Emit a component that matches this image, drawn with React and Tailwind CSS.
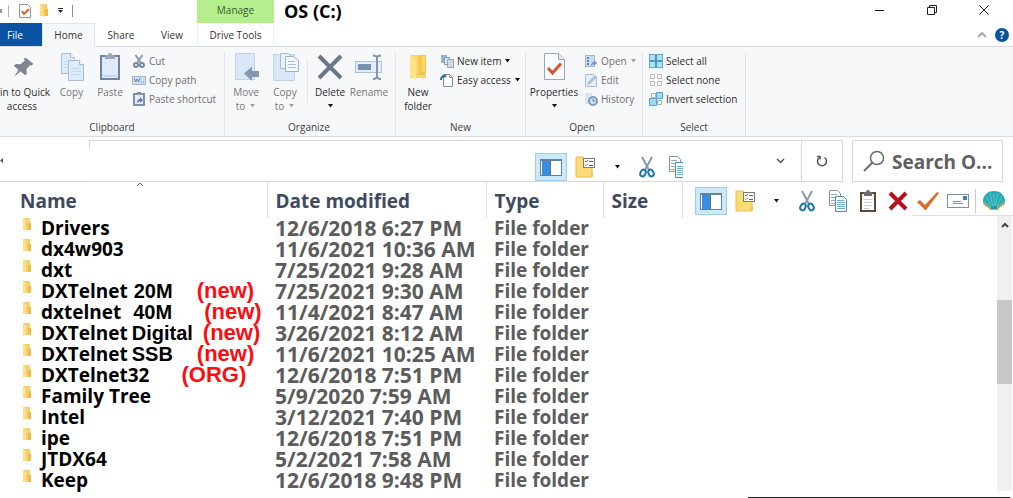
import React, { useState } from 'react'

const rows = [
  { name: 'Drivers', date: '12/6/2018 6:27 PM' },
  { name: 'dx4w903', date: '11/6/2021 10:36 AM' },
  { name: 'dxt', date: '7/25/2021 9:28 AM' },
  { name: 'DXTelnet', extra: '20M', extraCls: 'ml-1.5', note: '(new)', noteCls: 'ml-6', date: '7/25/2021 9:30 AM' },
  { name: 'dxtelnet', extra: '40M', extraCls: 'ml-3', note: '(new)', noteCls: 'ml-8', date: '11/4/2021 8:47 AM' },
  { name: 'DXTelnet', extra: 'Digital', extraCls: 'ml-1', note: '(new)', noteCls: 'ml-2.5', date: '3/26/2021 8:12 AM' },
  { name: 'DXTelnet', extra: 'SSB', extraCls: 'ml-1', note: '(new)', noteCls: 'ml-6', date: '11/6/2021 10:25 AM' },
  { name: 'DXTelnet32', note: '(ORG)', noteCls: 'ml-8', date: '12/6/2018 7:51 PM' },
  { name: 'Family Tree', date: '5/9/2020 7:59 AM' },
  { name: 'Intel', date: '3/12/2021 7:40 PM' },
  { name: 'ipe', date: '12/6/2018 7:51 PM' },
  { name: 'JTDX64', date: '5/2/2021 7:58 AM' },
  { name: 'Keep', date: '12/6/2018 9:48 PM' },
]

function Svg({ w, h, children, className = '' }) {
  return (
    <svg width={w} height={h} viewBox={`0 0 ${w} ${h}`} fill="none" aria-hidden="true" className={`shrink-0 ${className}`}>
      {children}
    </svg>
  )
}

const Caret = ({ color = '#111' }) => (
  <Svg w={7} h={4}><path d="M1 0h5L3.5 3.5z" fill={color} /></Svg>
)

/* ---------- ribbon icons, large ---------- */

const PinIcon = () => (
  <Svg w={32} h={32}>
    <path d="M19.5 6.5l8 6.5-2.2 1.4-1.1-.4-3.9 4.4.6 4.4-1.9 1.5-4.4-4-6.4 5.4 4.3-7-4.6-3.8 1.9-1.8 4.8.1 4.2-3.8-.8-1.3z" fill="#7d8590" />
  </Svg>
)

const Page = ({ x, y, w, h }) => (
  <>
    <path d={`M${x + 0.5} ${y + 0.5}h${w - 5}l4 4v${h - 4}h${-(w - 1)}z`} fill="#deebf9" stroke="#a6bbd6" />
    <path d={`M${x + w - 4.5} ${y + 0.5}v4h4`} stroke="#a6bbd6" fill="#f4f8fd" />
    <path d={`M${x + 3} ${y + 8.5}h${w - 6}M${x + 3} ${y + 11.5}h${w - 6}M${x + 3} ${y + 14.5}h${w - 6}`} stroke="#c8d9ee" />
  </>
)

const CopyIcon = () => (
  <Svg w={32} h={32}>
    <Page x={5} y={2} w={14} h={20} />
    <Page x={12} y={9} w={16} h={20} />
  </Svg>
)

const PasteIcon = () => (
  <Svg w={32} h={32}>
    <rect x="7" y="5" width="18" height="23" fill="#dfebfb" stroke="#71819f" strokeWidth="2" />
    <path d="M11 4h3q0-2 2-2t2 2h3v4H11z" fill="#9aa7ba" />
    <path d="M9 25h14" stroke="#c4d6ee" strokeWidth="2" />
  </Svg>
)

const MoveIcon = () => (
  <Svg w={32} h={32}>
    <rect x="5.500" y="2.500" width="19" height="26" fill="#dae7f7" stroke="#c2d3e9" />
    <path d="M14 22.500l8-7v4.500h7v6h-7v4z" fill="#8697b1" />
  </Svg>
)

const CopyToIcon = () => (
  <Svg w={32} h={32}>
    <rect x="4.500" y="3.500" width="21" height="26" fill="#dae7f7" stroke="#c2d3e9" />
    <path d="M11.500 2.500h8l4 4v11h-12z" fill="#e9f1fb" stroke="#a9bdd8" />
    <path d="M16.500 5.500h8l5 4v11h-13z" fill="#f4f8fd" stroke="#9db1cd" />
    <path d="M19 10.500h7M19 13.500h8M19 16.500h8" stroke="#a9bdd8" />
  </Svg>
)

const DeleteIcon = () => (
  <Svg w={32} h={32}>
    <path d="M5 5l22 22M27 5L5 27" stroke="#6b7789" strokeWidth="4" />
  </Svg>
)

const RenameIcon = () => (
  <Svg w={32} h={32}>
    <rect x="2.500" y="10.500" width="26" height="11" fill="#e4eefa" stroke="#aac0de" />
    <rect x="5" y="13" width="13" height="6" fill="#7990b3" />
    <path d="M20 4.500q4 0 4 2.500v18q0 3-4 3M28 4.500q-4 0-4 2.500v18q0 3 4 3" stroke="#8194b1" strokeWidth="2" />
  </Svg>
)

const FolderBigIcon = () => (
  <Svg w={32} h={32}>
    <path d="M8 4h16v23H8z" fill="#fbd765" />
    <path d="M16 4h8v20h-8z" fill="#f3c64e" />
    <path d="M8 4l6 4v21l-6-4z" fill="#ffe389" />
    <path d="M20 5h3v16h-3z" fill="#fbd565" />
  </Svg>
)

const PropertiesIcon = () => (
  <Svg w={32} h={32}>
    <path d="M6.500 2.500h14l6 6v20h-20z" fill="#fafcfe" stroke="#9aa7b8" />
    <path d="M20.500 2.500v6h6" fill="#e3eaf2" stroke="#9aa7b8" />
    <path d="M10 17l4.500 5L23 12.500" stroke="#d2582a" strokeWidth="3" />
  </Svg>
)

/* ---------- ribbon icons, small ---------- */

const ScissorsSmall = () => (
  <Svg w={14} h={14}>
    <path d="M3.500 1l5.500 8M10.500 1L5 9" stroke="#8a9ab2" strokeWidth="2" />
    <circle cx="4" cy="11" r="2" stroke="#7689a8" strokeWidth="2" />
    <circle cx="10" cy="11" r="2" stroke="#7689a8" strokeWidth="2" />
  </Svg>
)

const CopyPathSmall = () => (
  <Svg w={14} h={14}>
    <rect x="0.500" y="3.500" width="13" height="8" fill="#cfdff3" stroke="#a3b7d3" />
    <path d="M2 5l1.500 4L5 6l1.500 3L8 5" stroke="#6a82a8" />
    <path d="M9 9h1M11 9h1" stroke="#6a82a8" />
  </Svg>
)

const ShortcutSmall = () => (
  <Svg w={14} h={14}>
    <rect x="2" y="2" width="10" height="11" fill="#e6effa" stroke="#7e90ae" strokeWidth="2" />
    <path d="M5 0h4v3H5z" fill="#7e90ae" />
    <path d="M5 11q0-4 3-4V5l3 3-3 3V9" fill="#5b7db2" />
  </Svg>
)

const NewItemSmall = () => (
  <Svg w={14} h={14}>
    <path d="M1 1h6v8H1z" fill="#8fb6d6" />
    <path d="M4.500 3.500h5v7h-5z" fill="#dfeaf4" stroke="#8499b3" />
    <path d="M7.500 5.500h6v8h-6z" fill="#d3d9e1" stroke="#98a4b4" />
  </Svg>
)

const EasyAccessSmall = () => (
  <Svg w={14} h={14}>
    <path d="M3.500 1.500h6l3 3v9h-9z" fill="#fff" stroke="#8393a9" />
    <path d="M9.500 1.500v3h3" stroke="#8393a9" />
    <path d="M1 7q0-4 4-4" stroke="#2f6ea8" strokeWidth="2" />
    <path d="M4 1l3 2-3 2z" fill="#2f6ea8" />
  </Svg>
)

const OpenSmall = () => (
  <Svg w={14} h={14}>
    <rect x="1.500" y="1.500" width="9" height="11" fill="#cddef3" stroke="#a1b6d6" />
    <path d="M3 4h2M3 7h2M3 10h2" stroke="#6284b5" strokeWidth="2" />
    <path d="M7 12q0-4 3-4V6l3 3-3 3v-2" fill="#7592c0" />
  </Svg>
)

const EditSmall = () => (
  <Svg w={14} h={14}>
    <path d="M1.500 1.500h8l3 3v9h-11z" fill="#e4eefa" stroke="#a9bedb" />
    <path d="M3 12l1-3 7-7 2 2-7 7z" fill="#aac3e2" />
  </Svg>
)

const HistorySmall = () => (
  <Svg w={14} h={14}>
    <path d="M1 1h7v11H1z" fill="#d8e5f5" />
    <circle cx="9" cy="9" r="4" fill="#d3e1f4" stroke="#8098bf" strokeWidth="2" />
    <path d="M9 7v2h2" stroke="#6079a3" />
  </Svg>
)

const SelectAllSmall = () => (
  <Svg w={14} h={14}>
    <rect x="0.500" y="0.500" width="13" height="13" fill="#a9e2f8" stroke="#5fa9cd" />
    <path d="M7 1v12M1 7h12" stroke="#4a9cc6" strokeWidth="2" />
  </Svg>
)

const SelectNoneSmall = () => (
  <Svg w={14} h={14}>
    <path d="M1.500 1.500h4v4h-4zM8.500 1.500h4v4h-4zM1.500 8.500h4v4h-4zM8.500 8.500h4v4h-4z" fill="#fff" stroke="#bfb3b3" />
  </Svg>
)

const InvertSmall = () => (
  <Svg w={14} h={14}>
    <path d="M2.500 1.500h4v4h-4zM8.500 8.500h4v4h-4z" fill="#fff" stroke="#9fb4c4" />
    <path d="M7.500 0.500h6v6h-6zM0.500 6.500h7v7h-7z" fill="#9fd8f2" stroke="#58a6cf" />
  </Svg>
)

/* ---------- toolbar icons ---------- */

const PaneIcon = () => (
  <Svg w={22} h={17}>
    <rect x="0.500" y="0.500" width="21" height="16" fill="#fff" stroke="#6b7f92" />
    <path d="M1 1h20v1H1z" fill="#6b7f92" />
    <path d="M2 2h8v14H2z" fill="#3a8de0" />
    <path d="M10.500 2v14" stroke="#5b7086" />
  </Svg>
)

const DetailsIcon = () => (
  <Svg w={20} h={22}>
    <path d="M1 1h7l2 2h7v18H1z" fill="#fbdc74" stroke="#e3bd57" />
    <rect x="8.500" y="2.500" width="11" height="9" fill="#fff" stroke="#7c7c7c" />
    <path d="M10 5l1 1 2-2M10 8.500l1 1 2-2M14 5.500h4M14 9.500h4" stroke="#666" />
    <path d="M14 21l4-5v5z" fill="#eec35a" />
  </Svg>
)

const ScissorsIcon = () => (
  <Svg w={16} h={22}>
    <path d="M3 1l7 13M13 1L6 14" stroke="#8b98a5" strokeWidth="2" />
    <ellipse cx="4" cy="17" rx="2.500" ry="3.500" transform="rotate(25 4 17)" stroke="#1677a8" strokeWidth="2" />
    <ellipse cx="12" cy="17" rx="2.500" ry="3.500" transform="rotate(-25 12 17)" stroke="#1677a8" strokeWidth="2" />
  </Svg>
)

const CopyDocsIcon = () => (
  <Svg w={18} h={22}>
    <path d="M0.500 0.500h8l3 3v12h-11z" fill="#fff" stroke="#8a949e" />
    <path d="M2 4.500h6M2 7.500h8M2 10.500h8M2 13.500h8" stroke="#8fa9bd" />
    <path d="M6.500 6.500h8l3 3v12h-11z" fill="#fff" stroke="#5f8ba8" />
    <path d="M8 10.500h7M8 12.500h8M8 14.500h8M8 16.500h8M8 18.500h8" stroke="#6aaedb" />
  </Svg>
)

const ClipboardIcon = () => (
  <Svg w={16} h={22}>
    <rect x="1" y="3" width="14" height="18" fill="#fdfdfd" stroke="#5f4a33" strokeWidth="2" />
    <path d="M4 2h2q0-2 2-2t2 2h2v4H4z" fill="#6c6c6c" />
    <path d="M4 9.500h8M4 12.500h8M4 15.500h8M4 18.500h5" stroke="#c4ccd4" />
  </Svg>
)

const RedXIcon = () => (
  <Svg w={20} h={20}>
    <path d="M2 2l16 16M18 2L2 18" stroke="#b80f1c" strokeWidth="4" />
  </Svg>
)

const OrangeCheckIcon = () => (
  <Svg w={22} h={18}>
    <path d="M0 10l3-2 5 5L20 0l2 1L9 18H8z" fill="#d9702a" />
  </Svg>
)

const MailIcon = () => (
  <Svg w={22} h={14}>
    <rect x="0.500" y="0.500" width="21" height="13" fill="#fff" stroke="#8a8f96" />
    <path d="M6 7.500h8M6 9.500h10" stroke="#8195a8" />
    <path d="M16 2h4v4h-4z" fill="#2f86c9" />
  </Svg>
)

const ShellIcon = () => (
  <Svg w={22} h={20}>
    <path d="M11 0C4 0 0 5 0 10c0 4 3 5 5 6l2 3h8l2-3c2-1 5-2 5-6 0-5-4-10-11-10z" fill="#27a8b5" />
    <path d="M11 2v15M7 2l3 15M15 2l-3 15M3 5l6 12M19 5l-6 12M1 10l7 7M21 10l-7 7" stroke="#5cc8c6" />
    <path d="M0 11l5 4 2 2h8l2-2 5-4q0 4-5 5l-2 3H7l-2-3q-5-1-5-5z" fill="#e9a63a" />
    <path d="M8 15h6v3H8z" fill="#1e9aa8" />
  </Svg>
)

/* ---------- ribbon pieces ---------- */

function BigButton({ icon, lines, caret, dim, className }) {
  return (
    <button type="button" className={`flex flex-col items-center shrink-0 whitespace-nowrap ${dim ? 'text-[#767676]' : 'text-[#2b2b2b]'} ${className}`}>
      {icon}
      {lines.map((l, i) => (
        <span key={l} className={`flex items-center gap-1 ${i === 0 ? 'mt-0.5' : ''}`}>
          {l}
          {caret === 'inline' && i === lines.length - 1 && <Caret color="#a0a0a0" />}
        </span>
      ))}
      {caret === 'below' && <span className="flex items-center h-3.5"><Caret /></span>}
    </button>
  )
}

function SmallButton({ icon, label, caret, dim }) {
  return (
    <button type="button" className={`flex items-center gap-[3px] h-[19px] whitespace-nowrap ${dim ? 'text-[#6f6f6f]' : 'text-[#2b2b2b]'}`}>
      {icon}
      <span>{label}</span>
      {caret && <Caret color={dim ? '#a0a0a0' : '#111'} />}
    </button>
  )
}

function Group({ label, className, children }) {
  return (
    <section aria-label={label} className={`flex flex-col justify-between shrink-0 border-r border-[#e3e5e8] ${className}`}>
      <div className="flex items-start">{children}</div>
      <div className="text-center text-[#3c3c3c] pb-0.5">{label}</div>
    </section>
  )
}

const Stack = ({ children, className = '' }) => <div className={`flex flex-col items-start ${className}`}>{children}</div>

function ToolButton({ label, className = 'w-[30px]', children }) {
  return (
    <button type="button" aria-label={label} className={`flex items-center justify-center h-7 shrink-0 ${className}`}>
      {children}
    </button>
  )
}

function PaneTools() {
  return (
    <>
      <ToolButton label="Navigation pane" className="w-8 bg-[#cce8fb] border border-[#9fcdee]"><PaneIcon /></ToolButton>
      <ToolButton label="Folder options" className="w-9"><DetailsIcon /></ToolButton>
      <ToolButton label="More" className="w-7"><Caret /></ToolButton>
      <ToolButton label="Cut" className="w-8"><ScissorsIcon /></ToolButton>
    </>
  )
}

function TitleBar() {
  return (
    <header className="flex items-stretch h-[23px]">
      <div className="flex items-center w-[197px] shrink-0 pb-0.5">
        <span className="w-0.5 h-1 bg-[#9a9a9a]" />
        <span className="w-px h-3 ml-1.5 bg-[#b5b5b5]" />
        <button type="button" aria-label="Properties" className="ml-2.5">
          <Svg w={12} h={14}>
            <path d="M0.500 0.500h8l3 3v10h-11z" fill="#fff" stroke="#8e98a5" />
            <path d="M3 7l2 3 5-5" stroke="#d8622e" strokeWidth="2" />
          </Svg>
        </button>
        <button type="button" aria-label="New folder" className="ml-2"><FolderSmall /></button>
        <button type="button" aria-label="Customize" className="ml-2">
          <Svg w={7} h={6}><path d="M1 0.500h5" stroke="#222" /><path d="M1 2h5L3.500 5z" fill="#222" /></Svg>
        </button>
        <span className="w-px h-3 ml-2 bg-[#8c8c8c]" />
      </div>
      <div className="flex items-center justify-center w-[77px] shrink-0 pb-1 bg-[#b5ef8d] text-[#3c5a2c]">Manage</div>
      <h1 className="flex-1 pl-2.5 text-[18px] leading-[22px] font-bold text-black">OS (C:)</h1>
      <div className="flex pr-[3px]">
        <button type="button" aria-label="Minimize" className="flex items-center justify-center w-[52px] pb-[3px]">
          <Svg w={10} h={10}><path d="M0 5.500h9" stroke="#111" /></Svg>
        </button>
        <button type="button" aria-label="Restore" className="flex items-center justify-center w-[52px] pb-[3px]">
          <Svg w={10} h={10}><path d="M0.500 2.500h7v7h-7zM2.500 2V0.500h7v7H8" stroke="#222" /></Svg>
        </button>
        <button type="button" aria-label="Close" className="flex items-center justify-center w-[52px] pb-[3px]">
          <Svg w={10} h={10}><path d="M0.500 0.500l9 9M9.500 0.500l-9 9" stroke="#222" /></Svg>
        </button>
      </div>
    </header>
  )
}

const FolderSmall = () => (
  <Svg w={10} h={13}>
    <path d="M1 0h7v4l1 1v7H1z" fill="#f7d06b" />
    <path d="M1 0l3 2v11l-3-2z" fill="#fde08d" />
    <path d="M6 5h3v7H6z" fill="#ecbd4e" />
  </Svg>
)

function Tabs() {
  const tab = 'h-6 shrink-0 border-b border-[#d9dbde] text-center'
  return (
    <nav className="flex h-6 text-[#333]">
      <button type="button" className={`${tab} w-[42px] pr-3 bg-[#0a53a4] text-white`}>File</button>
      <button type="button" className="h-6 w-[53px] shrink-0 pb-0.5 border-x border-t border-[#e3e5e8] bg-[#f7f8fa]">Home</button>
      <button type="button" className={`${tab} w-[52px]`}>Share</button>
      <button type="button" className={`${tab} w-[50px]`}>View</button>
      <button type="button" className={`${tab} w-[77px] border-x border-x-[#eceeef]`}>Drive Tools</button>
      <div className="flex flex-1 items-center justify-end gap-2 pr-1 border-b border-[#d9dbde]">
        <button type="button" aria-label="Collapse ribbon">
          <Svg w={10} h={6}><path d="M1 5l4-4 4 4" stroke="#a9a9a9" strokeWidth="2" /></Svg>
        </button>
        <button type="button" aria-label="Help" className="w-3.5 h-3.5 rounded-full bg-[#0b549c] text-white font-bold leading-[14px]">?</button>
      </div>
    </nav>
  )
}

function Ribbon() {
  return (
    <div className="flex h-[90px] pt-1 overflow-hidden bg-[#f7f8fa] border-b border-[#dcdcdc]">
      <Group label="Clipboard" className="w-[225px]">
        <BigButton icon={<PinIcon />} lines={['Pin to Quick', 'access']} className="w-[58px] -ml-[7px]" />
        <BigButton icon={<CopyIcon />} lines={['Copy']} dim className="w-[41px]" />
        <BigButton icon={<PasteIcon />} lines={['Paste']} dim className="w-9" />
        <Stack className="ml-1">
          <SmallButton icon={<ScissorsSmall />} label="Cut" dim />
          <SmallButton icon={<CopyPathSmall />} label="Copy path" dim />
          <SmallButton icon={<ShortcutSmall />} label="Paste shortcut" dim />
        </Stack>
      </Group>
      <Group label="Organize" className="w-[171px] pr-0.5">
        <BigButton icon={<MoveIcon />} lines={['Move', 'to']} caret="inline" dim className="w-[42px]" />
        <BigButton icon={<CopyToIcon />} lines={['Copy', 'to']} caret="inline" dim className="w-9" />
        <div className="w-px h-11 mx-1 mt-2 bg-[#e3e5e8]" />
        <BigButton icon={<DeleteIcon />} lines={['Delete']} caret="below" className="w-9" />
        <BigButton icon={<RenameIcon />} lines={['Rename']} dim className="w-[42px]" />
      </Group>
      <Group label="New" className="w-[130px]">
        <BigButton icon={<FolderBigIcon />} lines={['New', 'folder']} className="w-11" />
        <Stack>
          <SmallButton icon={<NewItemSmall />} label="New item" caret />
          <SmallButton icon={<EasyAccessSmall />} label="Easy access" caret />
        </Stack>
      </Group>
      <Group label="Open" className="w-[117px] pr-1">
        <BigButton icon={<PropertiesIcon />} lines={['Properties']} caret="below" className="w-14" />
        <Stack className="ml-0.5">
          <SmallButton icon={<OpenSmall />} label="Open" caret dim />
          <SmallButton icon={<EditSmall />} label="Edit" dim />
          <SmallButton icon={<HistorySmall />} label="History" dim />
        </Stack>
      </Group>
      <Group label="Select" className="w-[103px] px-1.5">
        <Stack>
          <SmallButton icon={<SelectAllSmall />} label="Select all" />
          <SmallButton icon={<SelectNoneSmall />} label="Select none" />
          <SmallButton icon={<InvertSmall />} label="Invert selection" />
        </Stack>
      </Group>
    </div>
  )
}

function AddressRow() {
  const [query, setQuery] = useState('')
  return (
    <div className="flex h-[45px] pt-[3px]">
      <div className="flex items-center w-[89px] shrink-0 border-b border-[#d5d5d5]">
        <Svg w={3} h={5}><path d="M3 0v5L0 2.500z" fill="#555" /></Svg>
      </div>
      <div className="flex flex-1 justify-end border-y border-r border-[#d9d9d9]">
        <div className="w-px h-2 mr-auto bg-[#d9d9d9]" />
        <div className="flex self-end mr-[77px]">
          <PaneTools />
          <ToolButton label="Copy" className="w-5"><div className="w-3.5 ml-1.5 overflow-hidden"><CopyDocsIcon /></div></ToolButton>
        </div>
        <button type="button" aria-label="Previous locations" className="flex items-center justify-center w-[41px]">
          <Svg w={9} h={6}><path d="M1 1l3.500 3.500L8 1" stroke="#555" strokeWidth="1.500" /></Svg>
        </button>
        <button type="button" aria-label="Refresh" className="flex items-center justify-center w-[41px] border-l border-[#d9d9d9]">
          <Svg w={12} h={12}>
            <path d="M8.500 2.500a4.500 4.500 0 1 1-5 0" stroke="#555" strokeWidth="1.500" />
            <path d="M1 1.500h3v3" stroke="#555" strokeWidth="1.500" />
          </Svg>
        </button>
      </div>
      <label className="flex items-center w-[151px] ml-[9px] mr-2.5 pl-2.5 border border-[#d9d9d9]">
        <Svg w={22} h={22}>
          <circle cx="14" cy="8" r="6.500" stroke="#6b6b6b" strokeWidth="1.500" />
          <path d="M9.500 12.500L1 21" stroke="#6b6b6b" strokeWidth="2" />
        </Svg>
        <input
          aria-label="Search" placeholder="Search O..." value={query} onChange={e => setQuery(e.target.value)}
          className="flex-1 min-w-0 ml-[7px] pt-0.5 text-[19px] font-bold text-[#606060] placeholder:text-[#606060] outline-none" />
      </label>
    </div>
  )
}

function FileTable() {
  const th = 'h-9 pt-0.5 pl-2 text-left align-middle font-bold border-r border-[#e2e2e2]'
  return (
    <table className="w-[682px] shrink-0 table-fixed text-[19px] leading-[21px] font-bold whitespace-nowrap">
      <colgroup>
        <col className="w-[267px]" />
        <col className="w-[219px]" />
        <col className="w-[117px]" />
        <col className="w-[79px]" />
      </colgroup>
      <thead className="text-[#3f4a60]">
        <tr>
          <th className={`${th} relative pl-5`}>
            Name
            <Svg w={8} h={5} className="absolute left-[136px] top-0"><path d="M1 4l3-3 3 3" stroke="#666" /></Svg>
          </th>
          <th className={th}>Date modified</th>
          <th className={th}>Type</th>
          <th className={th}>Size</th>
        </tr>
      </thead>
      <tbody className="text-[#5c5c5c]">
        {rows.map(r => (
          <tr key={r.name + (r.extra || '')}>
            <td className="p-0">
              <div className="flex h-[21px] items-start pl-[22px] text-black">
                <FolderSmall />
                <span className="ml-[9px]">{r.name}</span>
                {r.extra && <span className={`font-['Liberation_Sans',Arial,sans-serif] text-[20px] leading-[21px] ${r.extraCls}`}>{r.extra}</span>}
                {r.note && <span className={`font-['Liberation_Sans',Arial,sans-serif] text-[22px] leading-[19px] text-[#fb0d12] ${r.noteCls}`}>{r.note}</span>}
              </div>
            </td>
            <td className="h-[21px] p-0 pl-2 text-[21px] leading-[21px]">{r.date}</td>
            <td className="h-[21px] p-0 pl-2">File folder</td>
            <td />
          </tr>
        ))}
      </tbody>
    </table>
  )
}

export default function App() {
  return (
    <div className="flex flex-col min-h-screen overflow-x-hidden bg-white font-['Open_Sans','Noto_Sans',sans-serif] text-[10px] leading-3.5">
      <TitleBar />
      <Tabs />
      <Ribbon />
      <AddressRow />
      <main className="flex flex-1">
        <FileTable />
        <div className="flex flex-col flex-1 min-w-0">
          <div className="flex items-center h-[34px] pl-3 pt-1">
            <PaneTools />
            <ToolButton label="Copy"><CopyDocsIcon /></ToolButton>
            <ToolButton label="Paste"><ClipboardIcon /></ToolButton>
            <ToolButton label="Delete"><RedXIcon /></ToolButton>
            <div className="flex flex-1 items-center border-b border-[#dedede]">
              <ToolButton label="Properties"><OrangeCheckIcon /></ToolButton>
              <ToolButton label="Email"><MailIcon /></ToolButton>
              <span className="w-px h-6 ml-0.5 bg-[#c9c9c9]" />
              <ToolButton label="Shell" className="w-9"><ShellIcon /></ToolButton>
            </div>
          </div>
          <div className="flex flex-1 justify-end pr-px">
            <div className="flex flex-col w-[15px] bg-[#f0f0f0]">
              <button type="button" aria-label="Scroll up" className="flex items-center justify-center h-[18px]">
                <Svg w={8} h={6}><path d="M1 5l3-3 3 3" stroke="#444" strokeWidth="2" /></Svg>
              </button>
              <div className="h-[84px] mt-[66px] bg-[#c8c8c8]" />
            </div>
          </div>
        </div>
      </main>
      <footer className="flex justify-end h-[7px] pr-[3px]">
        <div className="w-[262px] border-b border-[#222]" />
      </footer>
    </div>
  )
}
